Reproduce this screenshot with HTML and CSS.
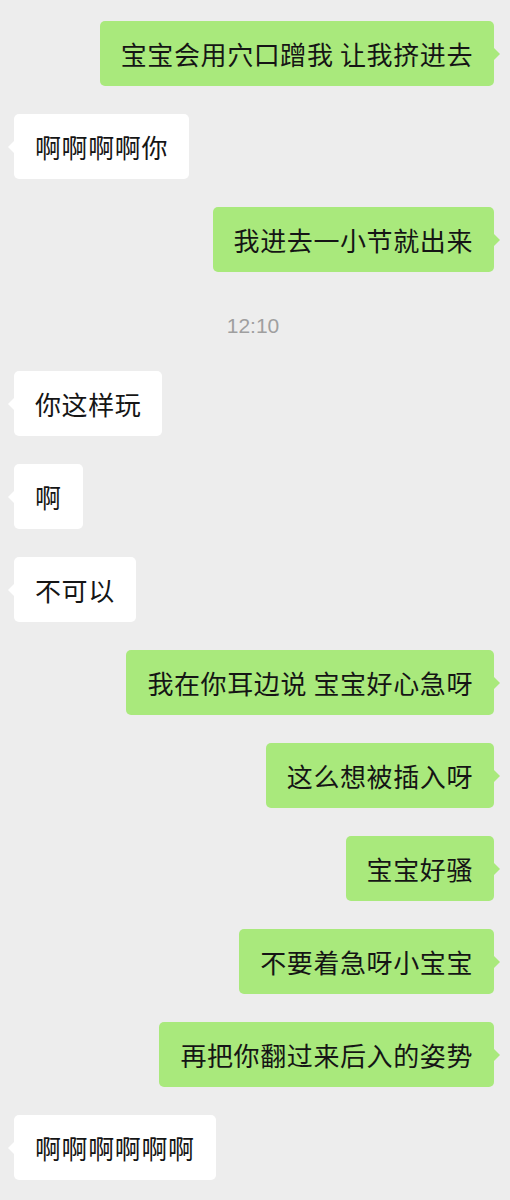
FILE: index.html
```html
<!DOCTYPE html>
<html lang="zh-CN">
<head>
<meta charset="utf-8">
<title>Chat</title>
<link rel="stylesheet" href="styles.css">
</head>
<body>
<div class="chat">
  <div class="row me"><div class="bubble">宝宝会用穴口蹭我 让我挤进去</div></div>
  <div class="row you"><div class="bubble">啊啊啊啊你</div></div>
  <div class="row me"><div class="bubble">我进去一小节就出来</div></div>
  <div class="time">12:10</div>
  <div class="row you"><div class="bubble">你这样玩</div></div>
  <div class="row you"><div class="bubble">啊</div></div>
  <div class="row you"><div class="bubble">不可以</div></div>
  <div class="row me"><div class="bubble">我在你耳边说 宝宝好心急呀</div></div>
  <div class="row me"><div class="bubble">这么想被插入呀</div></div>
  <div class="row me"><div class="bubble">宝宝好骚</div></div>
  <div class="row me"><div class="bubble">不要着急呀小宝宝</div></div>
  <div class="row me"><div class="bubble">再把你翻过来后入的姿势</div></div>
  <div class="row you"><div class="bubble">啊啊啊啊啊啊</div></div>
</div>
</body>
</html>
```
FILE: styles.css
```css
html, body {
  margin: 0;
  padding: 0;
  background: #ededed;
}
body {
  width: 510px;
  height: 1200px;
  overflow: hidden;
  font-family: "Noto Sans CJK SC", "Noto Sans", sans-serif;
}
.chat {
  display: flex;
  flex-direction: column;
  gap: 28px;
  padding: 21px 16px 0 14px;
}
.row {
  display: flex;
}
.row.me {
  justify-content: flex-end;
}
.row.you {
  justify-content: flex-start;
}
.bubble {
  position: relative;
  height: 65px;
  box-sizing: border-box;
  padding: 0 21px;
  line-height: 65px;
  font-size: 26px;
  letter-spacing: 0.6px;
  color: #151515;
  border-radius: 5px;
  white-space: nowrap;
}
.me .bubble {
  background: #a9e97c;
}
.you .bubble {
  background: #ffffff;
}
.bubble::after {
  content: "";
  position: absolute;
  top: 50%;
  margin-top: -6px;
  width: 0;
  height: 0;
  border-top: 6px solid transparent;
  border-bottom: 6px solid transparent;
}
.me .bubble::after {
  right: -6px;
  border-left: 6px solid #a9e97c;
}
.you .bubble::after {
  left: -6px;
  border-right: 6px solid #ffffff;
}
.time {
  height: 43px;
  box-sizing: border-box;
  padding-top: 10px;
  line-height: 32px;
  text-align: center;
  font-family: "Liberation Sans", Arial, sans-serif;
  font-size: 21px;
  color: #9f9f9f;
  padding-right: 2px;
}
```
